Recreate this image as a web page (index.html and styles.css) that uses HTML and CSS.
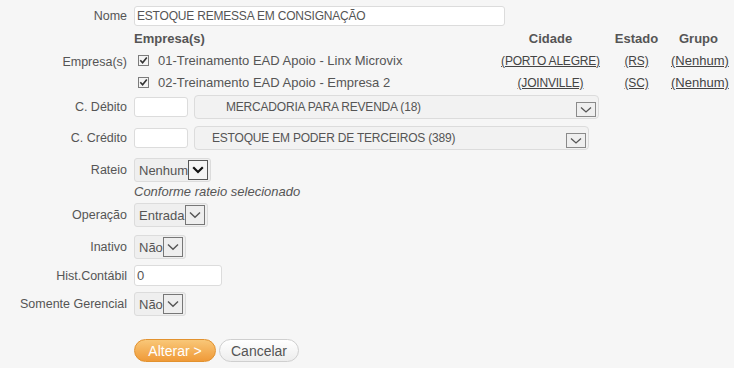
FILE: index.html
```html
<!DOCTYPE html>
<html lang="pt-BR">
<head>
<meta charset="utf-8">
<title>Movimento</title>
<link rel="stylesheet" href="styles.css">
</head>
<body>
<form class="form">
  <div class="row row-nome">
    <label class="lbl">Nome</label>
    <div class="field"><input class="text text-nome caps" type="text" value="ESTOQUE REMESSA EM CONSIGNAÇÃO"></div>
  </div>

  <div class="row row-empresas">
    <label class="lbl lbl-empresas">Empresa(s)</label>
    <div class="emp-table">
      <div class="emp-h emp-c1">Empresa(s)</div>
      <div class="emp-h emp-cc">Cidade</div>
      <div class="emp-h emp-cc">Estado</div>
      <div class="emp-h emp-cc">Grupo</div>

      <div class="emp-c1 emp-name">
        <span class="check"><svg width="11" height="11" viewBox="0 0 11 11"><rect x="0.5" y="0.5" width="10" height="10" fill="#f4f4f4" stroke="#7c7c7c"/><polyline points="2.3,5.2 4.6,7.8 8.8,2.4" fill="none" stroke="#333" stroke-width="1.6"/></svg></span>
        01-Treinamento EAD Apoio - Linx Microvix
      </div>
      <div class="emp-cc"><a class="lnk caps" href="#">(PORTO ALEGRE)</a></div>
      <div class="emp-cc"><a class="lnk caps" href="#">(RS)</a></div>
      <div class="emp-cc"><a class="lnk" href="#">(Nenhum)</a></div>

      <div class="emp-c1 emp-name">
        <span class="check"><svg width="11" height="11" viewBox="0 0 11 11"><rect x="0.5" y="0.5" width="10" height="10" fill="#f4f4f4" stroke="#7c7c7c"/><polyline points="2.3,5.2 4.6,7.8 8.8,2.4" fill="none" stroke="#333" stroke-width="1.6"/></svg></span>
        02-Treinamento EAD Apoio - Empresa 2
      </div>
      <div class="emp-cc"><a class="lnk caps" href="#">(JOINVILLE)</a></div>
      <div class="emp-cc"><a class="lnk caps" href="#">(SC)</a></div>
      <div class="emp-cc"><a class="lnk" href="#">(Nenhum)</a></div>
    </div>
  </div>

  <div class="row row-debito">
    <label class="lbl">C. Débito</label>
    <div class="field">
      <input class="text text-conta" type="text" value="">
      <div class="wselect wselect-debito">
        <span class="wselect-text caps">MERCADORIA PARA REVENDA (18)</span>
        <span class="warrow"><svg width="12" height="8" viewBox="0 0 12 8"><polyline points="1,1.5 6,6 11,1.5" fill="none" stroke="#555" stroke-width="1.3"/></svg></span>
      </div>
    </div>
  </div>

  <div class="row row-credito">
    <label class="lbl">C. Crédito</label>
    <div class="field">
      <input class="text text-conta" type="text" value="">
      <div class="wselect wselect-credito">
        <span class="wselect-text caps">ESTOQUE EM PODER DE TERCEIROS (389)</span>
        <span class="warrow"><svg width="12" height="8" viewBox="0 0 12 8"><polyline points="1,1.5 6,6 11,1.5" fill="none" stroke="#555" stroke-width="1.3"/></svg></span>
      </div>
    </div>
  </div>

  <div class="row row-rateio">
    <label class="lbl">Rateio</label>
    <div class="field">
      <div class="cselect cselect-rateio">
        <span>Nenhum</span>
        <span class="carrow carrow-dark"><svg width="12" height="8" viewBox="0 0 12 8"><polyline points="1.2,1.3 6,6 10.8,1.3" fill="none" stroke="#111" stroke-width="2.2"/></svg></span>
      </div>
    </div>
  </div>

  <div class="row row-note">
    <span></span>
    <div class="note">Conforme rateio selecionado</div>
  </div>

  <div class="row row-operacao">
    <label class="lbl">Operação</label>
    <div class="field">
      <div class="cselect">
        <span>Entrada</span>
        <span class="carrow"><svg width="12" height="8" viewBox="0 0 12 8"><polyline points="1,1.5 6,6.3 11,1.5" fill="none" stroke="#555" stroke-width="1.4"/></svg></span>
      </div>
    </div>
  </div>

  <div class="row row-inativo">
    <label class="lbl">Inativo</label>
    <div class="field">
      <div class="cselect">
        <span>Não</span>
        <span class="carrow"><svg width="12" height="8" viewBox="0 0 12 8"><polyline points="1,1.5 6,6.3 11,1.5" fill="none" stroke="#555" stroke-width="1.4"/></svg></span>
      </div>
    </div>
  </div>

  <div class="row row-hist">
    <label class="lbl">Hist.Contábil</label>
    <div class="field"><input class="text text-hist" type="text" value="0"></div>
  </div>

  <div class="row row-somente">
    <label class="lbl">Somente Gerencial</label>
    <div class="field">
      <div class="cselect">
        <span>Não</span>
        <span class="carrow"><svg width="12" height="8" viewBox="0 0 12 8"><polyline points="1,1.5 6,6.3 11,1.5" fill="none" stroke="#555" stroke-width="1.4"/></svg></span>
      </div>
    </div>
  </div>

  <div class="row row-actions">
    <span></span>
    <div class="actions">
      <button class="btn btn-primary" type="button">Alterar &gt;</button>
      <button class="btn btn-default" type="button">Cancelar</button>
    </div>
  </div>
</form>
</body>
</html>
```

FILE: styles.css
```css
html, body {
  margin: 0;
  padding: 0;
}

body {
  background: #f6f6f6;
  font-family: "Liberation Sans", Arial, sans-serif;
  font-size: 13px;
  color: #555;
}

.form {
  display: flex;
  flex-direction: column;
  padding-top: 6px;
}

.row {
  display: grid;
  grid-template-columns: 127px 1fr;
  column-gap: 7px;
  align-items: center;
}

.lbl {
  text-align: right;
  white-space: nowrap;
  font-size: 12.5px;
}

.field {
  display: flex;
  align-items: center;
  gap: 6px;
}

/* uppercase values are set slightly tighter */
.caps {
  font-size: 12px;
  letter-spacing: -0.2px;
}

/* text inputs */
.text {
  box-sizing: border-box;
  height: 20px;
  margin: 0;
  border: 1px solid #dcdcdc;
  border-radius: 3px;
  background: #fff;
  padding: 0 2px;
  font-family: "Liberation Sans", Arial, sans-serif;
  font-size: 13px;
  color: #555;
  outline: none;
}

.text.caps {
  font-size: 12px;
}

.text-nome { width: 371px; }
.text-conta { width: 54px; }
.text-hist { width: 88px; height: 21px; }

/* row spacing */
.row-empresas { margin-top: 1px; }
.row-debito { margin-top: 2px; }
.row-credito { margin-top: 7px; }
.row-rateio { margin-top: 8px; }
.row-note { margin-top: 2px; }
.row-operacao { margin-top: 3px; }
.row-inativo { margin-top: 8px; }
.row-hist { margin-top: 6px; }
.row-somente { margin-top: 6px; }
.row-actions { margin-top: 23px; }

/* empresas table */
.lbl-empresas {
  margin-top: 4px;
}

.emp-table {
  display: grid;
  grid-template-columns: 365px 103px 69px 55px;
  grid-auto-rows: 22px;
  align-items: center;
}

.emp-h {
  font-weight: bold;
  color: #555;
}

.emp-cc {
  text-align: center;
  white-space: nowrap;
}

.emp-name {
  display: flex;
  align-items: center;
  padding-left: 4px;
  white-space: nowrap;
}

.check {
  display: inline-flex;
  width: 11px;
  height: 11px;
  margin-right: 9px;
}

.lnk {
  color: #444;
  text-decoration: underline;
}

/* wide selects */
.wselect {
  box-sizing: border-box;
  height: 24px;
  display: flex;
  align-items: center;
  justify-content: space-between;
  border: 1px solid #dcdcdc;
  border-radius: 4px;
  background: #f2f2f2;
  padding-right: 2px;
}

.wselect-debito {
  width: 405px;
  padding-left: 31px;
}

.wselect-credito {
  width: 395px;
  padding-left: 17px;
}

.wselect-text {
  white-space: nowrap;
}

.warrow {
  box-sizing: border-box;
  width: 20px;
  height: 15px;
  margin-top: 5px;
  border: 1px solid #8a8a8a;
  background: #efefef;
  display: flex;
  align-items: center;
  justify-content: center;
}

/* compact selects */
.cselect {
  box-sizing: border-box;
  height: 24px;
  display: inline-flex;
  align-items: center;
  border: 1px solid #dcdcdc;
  border-radius: 3px;
  background: #efefef;
  padding: 0 2px 0 4px;
  white-space: nowrap;
}

.carrow {
  box-sizing: border-box;
  width: 20px;
  height: 20px;
  border: 1px solid #777;
  background: #eeeeee;
  display: flex;
  align-items: center;
  justify-content: center;
}

.carrow-dark {
  border-color: #555;
  background: #f4f4f4;
}

.note {
  font-style: italic;
  line-height: 16px;
}

/* buttons */
.actions {
  display: flex;
  gap: 3px;
}

.btn {
  box-sizing: border-box;
  height: 23px;
  margin: 0;
  border-radius: 12px;
  font-family: "Liberation Sans", Arial, sans-serif;
  font-size: 14px;
  padding: 0;
  cursor: pointer;
}

.btn-primary {
  width: 82px;
  color: #fff;
  border: 1px solid #e2922f;
  background: linear-gradient(#f9c778, #ef9a38);
}

.btn-default {
  width: 80px;
  color: #555;
  border: 1px solid #cfcfcf;
  background: linear-gradient(#ffffff, #ededed);
}
```
